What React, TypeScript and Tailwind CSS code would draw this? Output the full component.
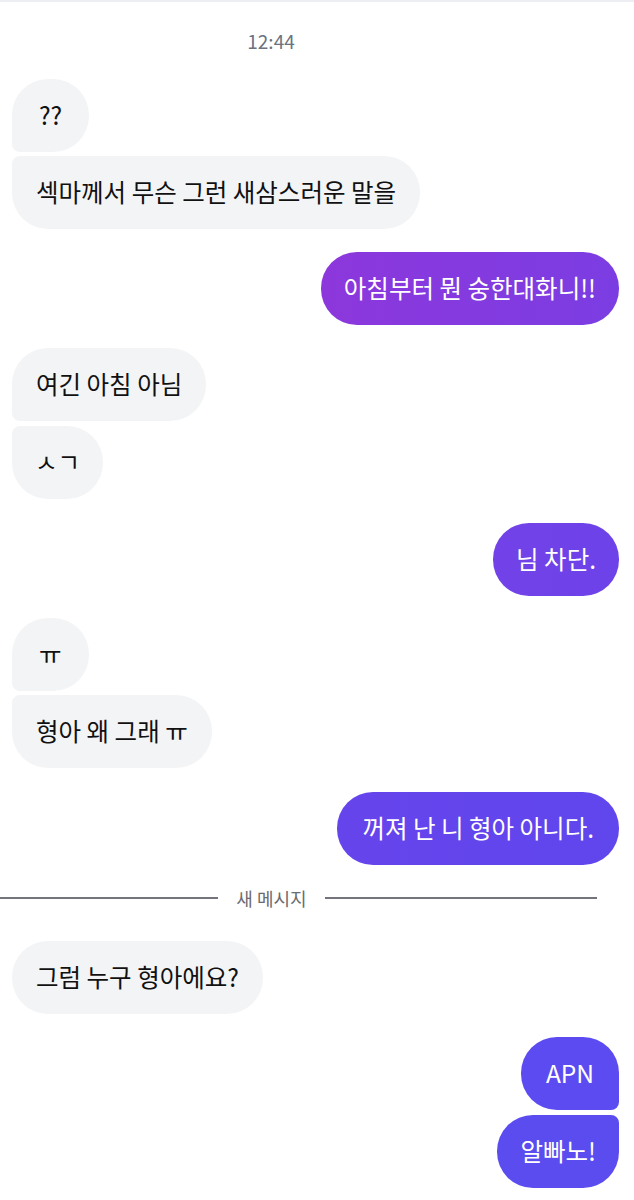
import type { ReactNode } from "react";

type Corner = "single" | "first" | "last";

const font = { fontFamily: '"Noto Sans CJK KR", "Noto Sans", sans-serif' };

function Incoming({
  children,
  pos = "single",
  pad = "px-[23px]",
}: {
  children: ReactNode;
  pos?: Corner;
  pad?: string;
}) {
  const shape =
    pos === "first"
      ? "rounded-[36px] rounded-bl-[8px]"
      : pos === "last"
        ? "rounded-[36px] rounded-tl-[8px]"
        : "rounded-[36px]";
  return (
    <div className="flex pl-3">
      <div className={`${shape} ${pad} bg-[#f3f4f6] pt-[19px] pb-[21px] text-[24.5px] leading-[33px] text-[#111]`}>
        {children}
      </div>
    </div>
  );
}

function Outgoing({
  children,
  pos = "single",
  bg,
  pad = "px-[23px]",
}: {
  children: ReactNode;
  pos?: Corner;
  bg: string;
  pad?: string;
}) {
  const shape =
    pos === "first"
      ? "rounded-[36px] rounded-br-[8px]"
      : pos === "last"
        ? "rounded-[36px] rounded-tr-[8px]"
        : "rounded-[36px]";
  return (
    <div className="flex justify-end pr-[15px]">
      <div className={`${shape} ${bg} ${pad} pt-[19px] pb-[21px] text-[24.5px] leading-[33px] text-white`}>
        {children}
      </div>
    </div>
  );
}

export default function App() {
  return (
    <div className="h-[1200px] w-[634px] overflow-hidden border-t-2 border-[#eceef3] bg-white" style={font}>
      {/* 시간 */}
      <div className="flex w-[542px] justify-center pt-[26px] text-[19px] leading-[26px] text-[#6b7280]">
        12:44
      </div>

      <div className="mt-[25px] flex flex-col">
        <Incoming pos="first" pad="px-[27px]">??</Incoming>
        <div className="h-1" />
        <Incoming pos="last" pad="px-[24px]">섹마께서 무슨 그런 새삼스러운 말을</Incoming>

        <div className="h-[23px]" />
        <Outgoing bg="bg-gradient-to-r from-[#8c37dc] to-[#7b3de2]">아침부터 뭔 숭한대화니!!</Outgoing>

        <div className="h-[23px]" />
        <Incoming pos="first" pad="px-[24px]">여긴 아침 아님</Incoming>
        <div className="h-[5px]" />
        <Incoming pos="last">ㅅㄱ</Incoming>

        <div className="h-[24px]" />
        <Outgoing bg="bg-gradient-to-r from-[#7242e8] to-[#6d42e9]">님 차단.</Outgoing>

        <div className="h-[22px]" />
        <Incoming pos="first" pad="px-[27px]">ㅠ</Incoming>
        <div className="h-1" />
        <Incoming pos="last" pad="px-[24px]">형아 왜 그래 ㅠ</Incoming>

        <div className="h-[24px]" />
        <Outgoing bg="bg-gradient-to-r from-[#6644ec] to-[#6046ed]" pad="px-[25px]">꺼져 난 니 형아 아니다.</Outgoing>

        {/* 새 메시지 구분선 */}
        <div className="flex h-[66px] items-center">
          <div className="h-[2px] w-[218px] bg-[#74747c]" />
          <div className="w-[107px] text-center text-[18px] leading-[24px] text-[#6b6b70]">새 메시지</div>
          <div className="h-[2px] w-[272px] bg-[#74747c]" />
        </div>

        <div className="h-[10px]" />
        <Incoming pos="single" pad="px-[24px]">그럼 누구 형아에요?</Incoming>

        <div className="h-[23px]" />
        <Outgoing pos="first" bg="bg-[#5b4bf0]" pad="px-[25px]">APN</Outgoing>
        <div className="h-[5px]" />
        <Outgoing pos="last" bg="bg-[#5a4cef]">알빠노!</Outgoing>
      </div>
    </div>
  );
}
